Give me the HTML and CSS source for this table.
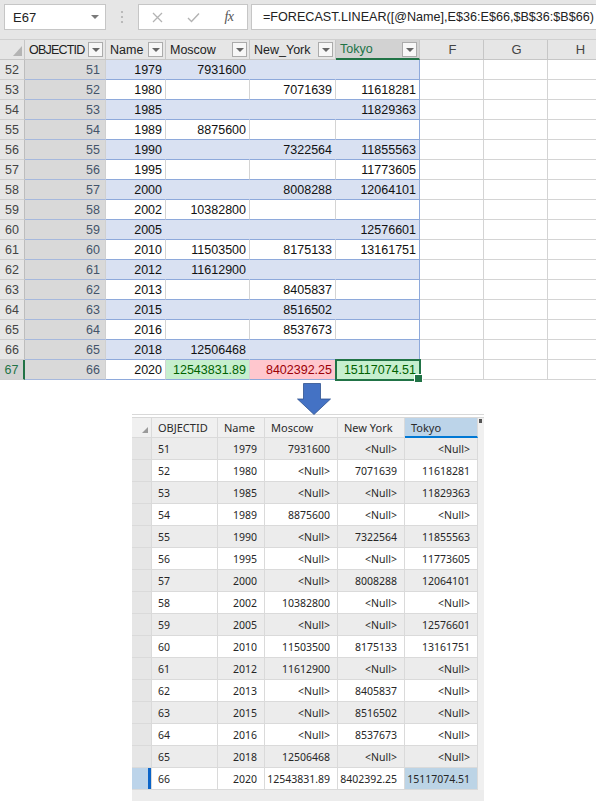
FILE: index.html
```html
<!DOCTYPE html>
<html>
<head>
<meta charset="utf-8">
<link rel="stylesheet" href="styles.css">
</head>
<body>
<div class="topbar">
  <div class="namebox"><span>E67</span><span class="nbarrow"></span></div>
  <div class="dots"><svg width="4" height="14" viewBox="0 0 4 14"><circle cx="2" cy="2" r="1.1" fill="#b0b0b0"/><circle cx="2" cy="7" r="1.1" fill="#b0b0b0"/><circle cx="2" cy="12" r="1.1" fill="#b0b0b0"/></svg></div>
  <div class="btnbox">
    <span class="slot"><svg width="11" height="11" viewBox="0 0 11 11"><path d="M1 1 L10 10 M10 1 L1 10" stroke="#b3b3b3" stroke-width="1.3" fill="none"/></svg></span>
    <span class="slot"><svg width="13" height="11" viewBox="0 0 13 11"><path d="M1 6 L4.5 9.5 L12 1.5" stroke="#b3b3b3" stroke-width="1.4" fill="none"/></svg></span>
    <span class="slot fx">fx</span>
  </div>
  <div class="formula">=FORECAST.LINEAR([@Name],E$36:E$66,$B$36:$B$66)</div>
</div>

<div class="sheet">
  <div class="xr xh">
    <div class="hc corner"><span class="tri"></span></div>
    <div class="hc"><span class="oidh">OBJECTID</span><span class="dd"></span></div>
    <div class="hc"><span>Name</span><span class="dd"></span></div>
    <div class="hc"><span>Moscow</span><span class="dd"></span></div>
    <div class="hc"><span>New_York</span><span class="dd"></span></div>
    <div class="hc tkh"><span>Tokyo</span><span class="dd"></span></div>
    <div class="hc letter">F</div>
    <div class="hc letter">G</div>
    <div class="hc letter">H</div>
  </div>

  <div class="xr b"><div class="c rh">52</div><div class="c oid">51</div><div class="c t">1979</div><div class="c t">7931600</div><div class="c t"></div><div class="c t tk"></div><div class="c"></div><div class="c"></div><div class="c"></div></div>
  <div class="xr"><div class="c rh">53</div><div class="c oid">52</div><div class="c t">1980</div><div class="c t"></div><div class="c t">7071639</div><div class="c t tk">11618281</div><div class="c"></div><div class="c"></div><div class="c"></div></div>
  <div class="xr b"><div class="c rh">54</div><div class="c oid">53</div><div class="c t">1985</div><div class="c t"></div><div class="c t"></div><div class="c t tk">11829363</div><div class="c"></div><div class="c"></div><div class="c"></div></div>
  <div class="xr"><div class="c rh">55</div><div class="c oid">54</div><div class="c t">1989</div><div class="c t">8875600</div><div class="c t"></div><div class="c t tk"></div><div class="c"></div><div class="c"></div><div class="c"></div></div>
  <div class="xr b"><div class="c rh">56</div><div class="c oid">55</div><div class="c t">1990</div><div class="c t"></div><div class="c t">7322564</div><div class="c t tk">11855563</div><div class="c"></div><div class="c"></div><div class="c"></div></div>
  <div class="xr"><div class="c rh">57</div><div class="c oid">56</div><div class="c t">1995</div><div class="c t"></div><div class="c t"></div><div class="c t tk">11773605</div><div class="c"></div><div class="c"></div><div class="c"></div></div>
  <div class="xr b"><div class="c rh">58</div><div class="c oid">57</div><div class="c t">2000</div><div class="c t"></div><div class="c t">8008288</div><div class="c t tk">12064101</div><div class="c"></div><div class="c"></div><div class="c"></div></div>
  <div class="xr"><div class="c rh">59</div><div class="c oid">58</div><div class="c t">2002</div><div class="c t">10382800</div><div class="c t"></div><div class="c t tk"></div><div class="c"></div><div class="c"></div><div class="c"></div></div>
  <div class="xr b"><div class="c rh">60</div><div class="c oid">59</div><div class="c t">2005</div><div class="c t"></div><div class="c t"></div><div class="c t tk">12576601</div><div class="c"></div><div class="c"></div><div class="c"></div></div>
  <div class="xr"><div class="c rh">61</div><div class="c oid">60</div><div class="c t">2010</div><div class="c t">11503500</div><div class="c t">8175133</div><div class="c t tk">13161751</div><div class="c"></div><div class="c"></div><div class="c"></div></div>
  <div class="xr b"><div class="c rh">62</div><div class="c oid">61</div><div class="c t">2012</div><div class="c t">11612900</div><div class="c t"></div><div class="c t tk"></div><div class="c"></div><div class="c"></div><div class="c"></div></div>
  <div class="xr"><div class="c rh">63</div><div class="c oid">62</div><div class="c t">2013</div><div class="c t"></div><div class="c t">8405837</div><div class="c t tk"></div><div class="c"></div><div class="c"></div><div class="c"></div></div>
  <div class="xr b"><div class="c rh">64</div><div class="c oid">63</div><div class="c t">2015</div><div class="c t"></div><div class="c t">8516502</div><div class="c t tk"></div><div class="c"></div><div class="c"></div><div class="c"></div></div>
  <div class="xr"><div class="c rh">65</div><div class="c oid">64</div><div class="c t">2016</div><div class="c t"></div><div class="c t">8537673</div><div class="c t tk"></div><div class="c"></div><div class="c"></div><div class="c"></div></div>
  <div class="xr b"><div class="c rh">66</div><div class="c oid">65</div><div class="c t">2018</div><div class="c t">12506468</div><div class="c t"></div><div class="c t tk"></div><div class="c"></div><div class="c"></div><div class="c"></div></div>
  <div class="xr sel"><div class="c rh">67</div><div class="c oid">66</div><div class="c t">2020</div><div class="c t good">12543831.89</div><div class="c t bad">8402392.25</div><div class="c t tk good cur">15117074.51</div><div class="c"></div><div class="c"></div><div class="c"></div></div>
</div>

<div class="arrowrow">
  <svg width="35" height="33" viewBox="0 0 35 33"><polygon points="6.5,0.5 23.5,0.5 23.5,16 33.5,16 17,31.5 0.5,16 6.5,16" fill="#4472c4" stroke="#2f528f" stroke-width="0.8"/></svg>
</div>

<div class="gt">
  <div class="g gh">
    <div class="gc gs"><span class="gtri"></span></div>
    <div class="gc l">OBJECTID</div>
    <div class="gc l">Name</div>
    <div class="gc l">Moscow</div>
    <div class="gc l">New York</div>
    <div class="gc l gtk">Tokyo</div>
    <div class="gx"><span class="mark"></span></div>
  </div>
  <div class="g gb"><div class="gc gs"></div><div class="gc l">51</div><div class="gc">1979</div><div class="gc">7931600</div><div class="gc">&lt;Null&gt;</div><div class="gc">&lt;Null&gt;</div><div class="gx"></div></div>
  <div class="g"><div class="gc gs"></div><div class="gc l">52</div><div class="gc">1980</div><div class="gc">&lt;Null&gt;</div><div class="gc">7071639</div><div class="gc">11618281</div><div class="gx"></div></div>
  <div class="g gb"><div class="gc gs"></div><div class="gc l">53</div><div class="gc">1985</div><div class="gc">&lt;Null&gt;</div><div class="gc">&lt;Null&gt;</div><div class="gc">11829363</div><div class="gx"></div></div>
  <div class="g"><div class="gc gs"></div><div class="gc l">54</div><div class="gc">1989</div><div class="gc">8875600</div><div class="gc">&lt;Null&gt;</div><div class="gc">&lt;Null&gt;</div><div class="gx"></div></div>
  <div class="g gb"><div class="gc gs"></div><div class="gc l">55</div><div class="gc">1990</div><div class="gc">&lt;Null&gt;</div><div class="gc">7322564</div><div class="gc">11855563</div><div class="gx"></div></div>
  <div class="g"><div class="gc gs"></div><div class="gc l">56</div><div class="gc">1995</div><div class="gc">&lt;Null&gt;</div><div class="gc">&lt;Null&gt;</div><div class="gc">11773605</div><div class="gx"></div></div>
  <div class="g gb"><div class="gc gs"></div><div class="gc l">57</div><div class="gc">2000</div><div class="gc">&lt;Null&gt;</div><div class="gc">8008288</div><div class="gc">12064101</div><div class="gx"></div></div>
  <div class="g"><div class="gc gs"></div><div class="gc l">58</div><div class="gc">2002</div><div class="gc">10382800</div><div class="gc">&lt;Null&gt;</div><div class="gc">&lt;Null&gt;</div><div class="gx"></div></div>
  <div class="g gb"><div class="gc gs"></div><div class="gc l">59</div><div class="gc">2005</div><div class="gc">&lt;Null&gt;</div><div class="gc">&lt;Null&gt;</div><div class="gc">12576601</div><div class="gx"></div></div>
  <div class="g"><div class="gc gs"></div><div class="gc l">60</div><div class="gc">2010</div><div class="gc">11503500</div><div class="gc">8175133</div><div class="gc">13161751</div><div class="gx"></div></div>
  <div class="g gb"><div class="gc gs"></div><div class="gc l">61</div><div class="gc">2012</div><div class="gc">11612900</div><div class="gc">&lt;Null&gt;</div><div class="gc">&lt;Null&gt;</div><div class="gx"></div></div>
  <div class="g"><div class="gc gs"></div><div class="gc l">62</div><div class="gc">2013</div><div class="gc">&lt;Null&gt;</div><div class="gc">8405837</div><div class="gc">&lt;Null&gt;</div><div class="gx"></div></div>
  <div class="g gb"><div class="gc gs"></div><div class="gc l">63</div><div class="gc">2015</div><div class="gc">&lt;Null&gt;</div><div class="gc">8516502</div><div class="gc">&lt;Null&gt;</div><div class="gx"></div></div>
  <div class="g"><div class="gc gs"></div><div class="gc l">64</div><div class="gc">2016</div><div class="gc">&lt;Null&gt;</div><div class="gc">8537673</div><div class="gc">&lt;Null&gt;</div><div class="gx"></div></div>
  <div class="g gb"><div class="gc gs"></div><div class="gc l">65</div><div class="gc">2018</div><div class="gc">12506468</div><div class="gc">&lt;Null&gt;</div><div class="gc">&lt;Null&gt;</div><div class="gx"></div></div>
  <div class="g gsel"><div class="gc gs"></div><div class="gc l">66</div><div class="gc">2020</div><div class="gc">12543831.89</div><div class="gc">8402392.25</div><div class="gc gcur">15117074.51</div><div class="gx"></div></div>
  <div class="addrow">Click to add new row.</div>
</div>
</body>
</html>
```
FILE: styles.css
```css
* { box-sizing: border-box; }
html, body {
  margin: 0;
  padding: 0;
  width: 596px;
  height: 801px;
  overflow: hidden;
  background: #ffffff;
}
body { font-family: "Liberation Sans", Arial, sans-serif; }

/* ---------- formula bar ---------- */
.topbar {
  height: 40px;
  background: #e6e6e6;
  border-bottom: 1px solid #d0d0d0;
  display: flex;
  align-items: flex-start;
  padding: 4px 0 0 4px;
  width: 620px;
}
.namebox {
  width: 102px;
  height: 26px;
  background: #fff;
  border: 1px solid #c6c6c6;
  display: flex;
  align-items: center;
  justify-content: space-between;
  padding: 0 6px 0 8px;
  font-size: 13px;
  color: #222;
}
.nbarrow {
  width: 0; height: 0;
  border-left: 4px solid transparent;
  border-right: 4px solid transparent;
  border-top: 4px solid #7a7a7a;
}
.dots {
  width: 32px;
  height: 26px;
  display: flex;
  align-items: center;
  justify-content: center;
}
.btnbox {
  width: 110px;
  height: 26px;
  background: #fff;
  border: 1px solid #c6c6c6;
  display: flex;
  align-items: center;
}
.slot {
  width: 36px;
  height: 24px;
  display: flex;
  align-items: center;
  justify-content: center;
}
.fx {
  font-family: "Liberation Serif", "Times New Roman", serif;
  font-style: italic;
  font-size: 14px;
  color: #555;
  letter-spacing: -0.5px;
}
.formula {
  margin-left: 3px;
  flex: 1;
  height: 26px;
  background: #fff;
  border: 1px solid #c6c6c6;
  display: flex;
  align-items: center;
  padding-left: 11px;
  font-size: 12.6px;
  color: #222;
  white-space: nowrap;
}

/* ---------- excel grid ---------- */
.sheet { width: 612px; }
.xr {
  display: grid;
  grid-template-columns: 25px 81px 60px 84px 86px 84px 64px 64px 64px;
  height: 20px;
}
.hc {
  background: #e6e6e6;
  border-right: 1px solid #c6c6c6;
  border-bottom: 1px solid #c6c6c6;
  display: flex;
  align-items: center;
  justify-content: space-between;
  padding: 0 2px 0 4px;
  font-size: 12.5px;
  color: #222;
  white-space: nowrap;
  overflow: hidden;
}
.oidh { letter-spacing: -0.8px; }
.corner { justify-content: flex-end; align-items: flex-end; padding: 0 2px 3px 0; }
.tri {
  width: 9px; height: 10px;
  background: #b4b4b4;
  clip-path: polygon(100% 0, 100% 100%, 0 100%);
}
.dd {
  width: 15px;
  height: 15px;
  flex: none;
  border: 1px solid #ababab;
  background: #f7f7f7;
  display: flex;
  align-items: center;
  justify-content: center;
}
.dd::before {
  content: "";
  border-left: 4px solid transparent;
  border-right: 4px solid transparent;
  border-top: 4px solid #666;
  margin-top: 1px;
}
.tkh {
  background: #d2d2d2;
  color: #217346;
  border-bottom: 2px solid #217346;
}
.letter { justify-content: center; color: #444; font-size: 13px; }

.c {
  border-right: 1px solid #d4d4d4;
  border-bottom: 1px solid #d4d4d4;
  display: flex;
  align-items: center;
  justify-content: flex-end;
  padding-right: 3px;
  font-size: 12.5px;
  color: #111;
  white-space: nowrap;
}
.rh {
  background: #e6e6e6;
  justify-content: center;
  padding: 0;
  color: #444;
  border-right-color: #bdbdbd;
  border-bottom-color: #d0d0d0;
}
.oid {
  background: #d9d9d9;
  color: #44546a;
  padding-right: 5px;
  border-right-color: #d0d0d0;
  border-bottom-color: #a6b8dc;
}
.t { border-bottom-color: #8ea9db; }
.b .t { background: #d9e1f2; border-right-color: #d9e1f2; }
.xr .tk { border-right-color: #8ea9db; }
.sel .rh {
  background: #d2d2d2;
  color: #217346;
  border-right: 2px solid #217346;
}
.good { background: #c6efce; color: #006100; }
.bad { background: #ffc7ce; color: #9c0006; }
.cur {
  position: relative;
  z-index: 1;
  outline: 2px solid #217346;
  outline-offset: -1px;
}
.cur::after {
  content: "";
  position: absolute;
  right: -4px;
  bottom: -4px;
  width: 7px;
  height: 7px;
  background: #217346;
  border: 1px solid #fff;
}

/* ---------- arrow ---------- */
.arrowrow {
  height: 34px;
  padding: 3px 0 0 297px;
}
.arrowrow svg { display: block; }

/* ---------- ArcGIS attribute table ---------- */
.gt {
  margin-left: 132px;
  width: 352px;
  border-top: 1px solid #d8d8d8;
  padding-top: 2px;
  font-family: "Noto Sans", "Open Sans", sans-serif;
}
.g {
  display: grid;
  grid-template-columns: 20px 66px 47px 73px 67px 73px 6px;
  height: 22px;
}
.gh { height: 21px; border-top: 1px solid #d8d8d8; }
.gh .gc { background: #f0f0f0; font-size: 11px; color: #2b2b2b; }
.gc {
  border-right: 1px solid #dadada;
  border-bottom: 1px solid #dadada;
  display: flex;
  align-items: center;
  justify-content: flex-end;
  padding: 0 7px 0 2px;
  font-size: 10.5px;
  color: #262626;
  white-space: nowrap;
  overflow: hidden;
  background: #fff;
}
.gc.l { justify-content: flex-start; padding: 0 2px 0 6px; }
.gb .gc { background: #ececec; }
.g .gs { background: #e6e6e6; padding: 0; }
.gh .gs { justify-content: flex-end; align-items: flex-end; padding: 0 3px 4px 0; background: #f0f0f0; }
.gtri {
  width: 6px; height: 6px;
  background: #9a9a9a;
  clip-path: polygon(100% 0, 100% 100%, 0 100%);
}
.gh .gtk {
  background: #bcd4e9;
  border-bottom: 2px solid #0078d4;
}
.gx { background: #f0f0f0; }
.mark { display: block; width: 3px; height: 4px; margin: 1px 0 0 1px; background: #555; }
.gsel .gs {
  background: #bcd4ea;
  box-shadow: inset -3px 0 0 #0a64c8;
}
.gsel .gcur { background: #bcd4e6; }
.addrow {
  height: 22px;
  background: #ececec;
  padding-left: 23px;
  font-size: 10.5px;
  color: #555;
  display: flex;
  align-items: flex-end;
}
```
